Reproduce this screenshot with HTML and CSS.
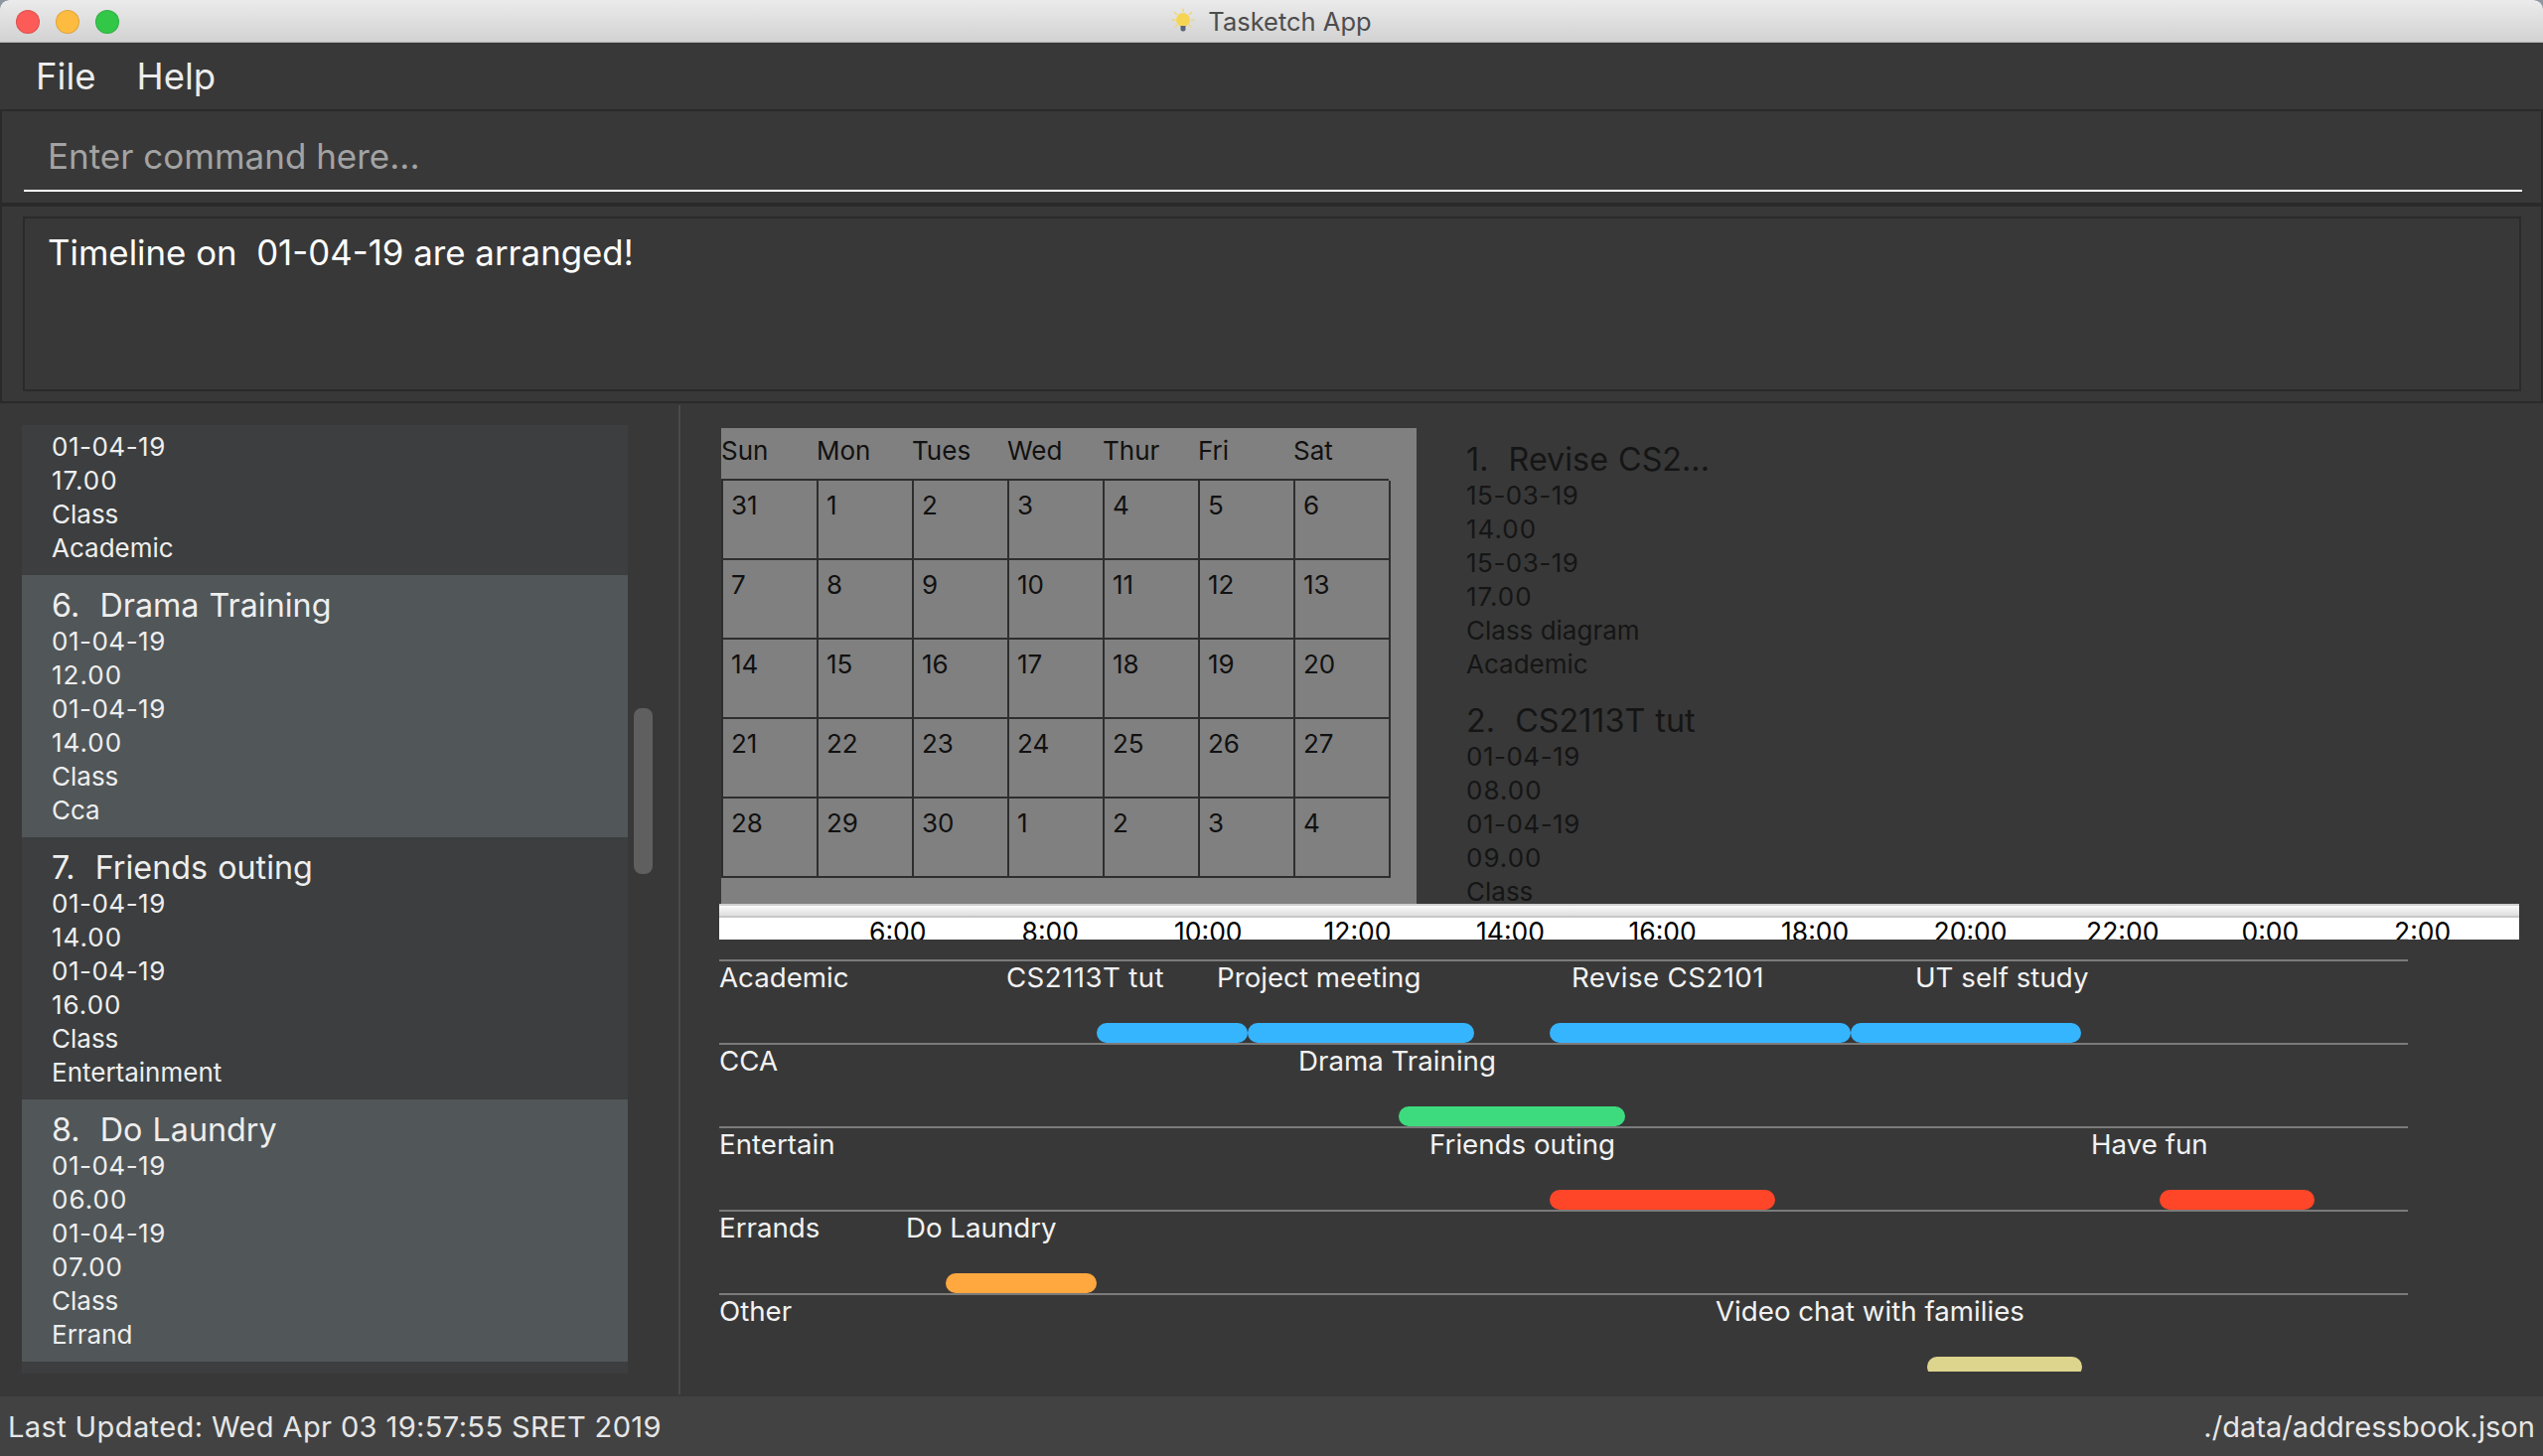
FILE: index.html
```html
<!DOCTYPE html>
<html>
<head>
  <meta charset="UTF-8">
  <title>Tasketch App</title>
  <link rel="stylesheet" href="styles.css">
</head>
<body>
  <div class="window">
    <header class="titlebar">
      <div class="lights">
        <span class="light red"></span>
        <span class="light amber"></span>
        <span class="light green"></span>
      </div>
      <div class="title">
        <svg class="bulb" width="24" height="26" viewBox="0 0 24 26">
          <g stroke="#ecd67e" stroke-width="1.4" stroke-linecap="round">
            <path d="M12 1v2.500M3.500 4.500l2 2M20.500 4.500l-2 2M1 12h2.500M23 12h-2.500M4 19l1.800-1.500M20 19l-1.800-1.500"/>
          </g>
          <circle cx="12" cy="12" r="7" fill="#f6d555"/>
          <path d="M9.500 18h5v3.500a2 2 0 0 1-2 2h-1a2 2 0 0 1-2-2z" fill="#5b6478"/>
        </svg>
        <span>Tasketch App</span>
      </div>
    </header>

    <nav class="menubar">
      <span>File</span>
      <span>Help</span>
    </nav>

    <section class="command">
      <div class="command-input">Enter command here...</div>
    </section>

    <section class="result">
      <div class="result-box">Timeline on &nbsp;01-04-19 are arranged!</div>
    </section>

    <main class="split">
      <aside class="list-pane">
        <div class="task-list">
          <div class="card card-cut">
            <div class="date">01-04-19</div>
            <div class="time">17.00</div>
            <div>Class</div>
            <div>Academic</div>
          </div>
          <div class="card card-alt">
            <div class="card-name">6. &nbsp;Drama Training</div>
            <div class="date">01-04-19</div>
            <div class="time">12.00</div>
            <div class="date">01-04-19</div>
            <div class="time">14.00</div>
            <div>Class</div>
            <div>Cca</div>
          </div>
          <div class="card">
            <div class="card-name">7. &nbsp;Friends outing</div>
            <div class="date">01-04-19</div>
            <div class="time">14.00</div>
            <div class="date">01-04-19</div>
            <div class="time">16.00</div>
            <div>Class</div>
            <div>Entertainment</div>
          </div>
          <div class="card card-alt">
            <div class="card-name">8. &nbsp;Do Laundry</div>
            <div class="date">01-04-19</div>
            <div class="time">06.00</div>
            <div class="date">01-04-19</div>
            <div class="time">07.00</div>
            <div>Class</div>
            <div>Errand</div>
          </div>
        </div>
        <div class="scrollbar"></div>
      </aside>

      <div class="main-pane">
        <div class="top-row">
          <div class="calendar">
            <div class="weekdays">
              <span>Sun</span><span>Mon</span><span>Tues</span><span>Wed</span><span>Thur</span><span>Fri</span><span>Sat</span>
            </div>
            <div class="days">
              <span>31</span><span>1</span><span>2</span><span>3</span><span>4</span><span>5</span><span>6</span>
              <span>7</span><span>8</span><span>9</span><span>10</span><span>11</span><span>12</span><span>13</span>
              <span>14</span><span>15</span><span>16</span><span>17</span><span>18</span><span>19</span><span>20</span>
              <span>21</span><span>22</span><span>23</span><span>24</span><span>25</span><span>26</span><span>27</span>
              <span>28</span><span>29</span><span>30</span><span>1</span><span>2</span><span>3</span><span>4</span>
            </div>
          </div>

          <div class="today">
            <div class="today-item">
              <div class="today-name">1. &nbsp;Revise CS2...</div>
              <div class="date">15-03-19</div>
              <div class="time">14.00</div>
              <div class="date">15-03-19</div>
              <div class="time">17.00</div>
              <div>Class diagram</div>
              <div>Academic</div>
            </div>
            <div class="today-item">
              <div class="today-name">2. &nbsp;CS2113T tut</div>
              <div class="date">01-04-19</div>
              <div class="time">08.00</div>
              <div class="date">01-04-19</div>
              <div class="time">09.00</div>
              <div>Class</div>
            </div>
          </div>
        </div>

        <div class="axis">
          <div class="axis-head"></div>
          <div class="axis-ticks">
            <span>6:00</span><span>8:00</span><span>10:00</span><span class="wide">12:00</span><span class="wide">14:00</span><span class="wide">16:00</span><span class="wide">18:00</span><span class="wide">20:00</span><span class="wide">22:00</span><span>0:00</span><span>2:00</span>
          </div>
        </div>

        <div class="gantt">
          <div class="lane">
            <span class="lane-name">Academic</span>
            <span class="event digits" style="left: 289px">CS2113T tut</span>
            <span class="event" style="left: 501px">Project meeting</span>
            <span class="event digits" style="left: 858px">Revise CS2101</span>
            <span class="event" style="left: 1204px">UT self study</span>
            <span class="bar blue" style="left: 380px; width: 152px"></span>
            <span class="bar blue" style="left: 532px; width: 228px"></span>
            <span class="bar blue" style="left: 836px; width: 303px"></span>
            <span class="bar blue" style="left: 1139px; width: 232px"></span>
          </div>
          <div class="lane">
            <span class="lane-name">CCA</span>
            <span class="event" style="left: 583px">Drama Training</span>
            <span class="bar mint" style="left: 684px; width: 228px"></span>
          </div>
          <div class="lane">
            <span class="lane-name">Entertain</span>
            <span class="event" style="left: 715px">Friends outing</span>
            <span class="event" style="left: 1381px">Have fun</span>
            <span class="bar tomato" style="left: 836px; width: 227px"></span>
            <span class="bar tomato" style="left: 1450px; width: 156px"></span>
          </div>
          <div class="lane">
            <span class="lane-name">Errands</span>
            <span class="event" style="left: 188px">Do Laundry</span>
            <span class="bar orange" style="left: 228px; width: 152px"></span>
          </div>
          <div class="lane lane-last">
            <span class="lane-name">Other</span>
            <span class="event" style="left: 1003px">Video chat with families</span>
            <span class="bar sand" style="left: 1216px; width: 156px"></span>
          </div>
        </div>
      </div>
    </main>

    <footer class="statusbar">
      <span class="updated">Last Updated: Wed Apr 03 19:57:55 SRET 2019</span>
      <span>./data/addressbook.json</span>
    </footer>
  </div>
</body>
</html>
```

FILE: styles.css
```css
/* Page */
html, body {
  margin: 0;
  padding: 0;
  background-color: #8d96a3;
}

.window {
  display: flex;
  flex-direction: column;
  width: 2560px;
  height: 1466px;
  overflow: hidden;
  border-radius: 9px 9px 0 0;
  background-color: #383838;
  color: #fff;
  font-family: Inter, Roboto, "Noto Sans", sans-serif;
}

/* Title bar */
.titlebar {
  display: flex;
  flex: none;
  align-items: center;
  justify-content: center;
  position: relative;
  height: 43px;
  box-sizing: border-box;
  border-bottom: 1px solid #b4b4b4;
  background: linear-gradient(#ebebeb, #d2d2d2);
}

.lights {
  display: flex;
  gap: 16px;
  position: absolute;
  left: 16px;
  top: 10px;
}

.light {
  width: 22px;
  height: 22px;
  border: 1px solid rgba(0, 0, 0, 0.12);
  border-radius: 50%;
}

.red { background-color: #fc5b57; }
.amber { background-color: #fdbc40; }
.green { background-color: #33c748; }

.title {
  display: flex;
  align-items: center;
  gap: 13px;
  color: #4d4d4d;
  font-size: 25.5px;
}

/* Menu */
.menubar {
  display: flex;
  flex: none;
  gap: 41px;
  align-items: center;
  height: 67px;
  padding-left: 36px;
  border-bottom: 2px solid #2a2a2a;
  font-size: 36.5px;
  color: #ececec;
}

/* Command box */
.command {
  flex: none;
  height: 92px;
  padding: 0 19px 0 22px;
  border-left: 2px solid #2a2a2a;
  border-right: 2px solid #2a2a2a;
  box-sizing: border-box;
}

.command-input {
  height: 81px;
  box-sizing: border-box;
  padding: 23px 0 0 24px;
  border-bottom: 2px solid #fff;
  color: #a3a3a3;
  font-size: 35px;
  line-height: 44px;
}

/* Result box */
.result {
  flex: none;
  height: 202px;
  box-sizing: border-box;
  padding: 10px 20px 10px 21px;
  border: 2px solid #2a2a2a;
  border-top-width: 4px;
}

.result-box {
  height: 100%;
  box-sizing: border-box;
  padding: 11px 0 0 23px;
  border: 2px solid #2a2a2a;
  font-size: 34.8px;
  line-height: 46px;
}

/* Main split */
.split {
  display: flex;
  flex: 1;
  min-height: 0;
}

.list-pane {
  display: flex;
  flex: none;
  width: 683px;
  height: 976px;
  margin: 2px 0;
  padding-top: 20px;
  border-right: 2px solid #4a4a4a;
}

.task-list {
  flex: none;
  width: 610px;
  height: 955px;
  margin-left: 22px;
  background-color: #3c3e3f;
  font-size: 26px;
  line-height: 34px;
  color: #eee;
}

.card {
  height: 264px;
  box-sizing: border-box;
  padding: 11px 30px 0;
}

.card-cut {
  height: 151px;
  padding-top: 5px;
}

.card-alt {
  background-color: #515658;
}

.card-name {
  font-size: 32.3px;
  line-height: 39px;
  word-spacing: 1px;
}

/* digits sit a bit wider in the original font */
.date {
  letter-spacing: 0.5px;
}

.time {
  letter-spacing: 1px;
}

.scrollbar {
  flex: none;
  width: 19px;
  height: 167px;
  margin: 285px 0 0 6px;
  border-radius: 8px;
  background-color: #5f5f5f;
}

/* Right side */
.main-pane {
  flex: 1;
  min-width: 0;
  padding: 25px 0 0 39px;
  box-sizing: border-box;
  height: 975px;
  overflow: hidden;
}

.top-row {
  display: flex;
  height: 479px;
  margin-left: 2px;
  overflow: hidden;
}

.calendar {
  flex: none;
  width: 700px;
  background-color: #808080;
  color: #111;
  font-size: 26px;
}

.weekdays {
  display: grid;
  grid-template-columns: repeat(7, 96px);
  height: 51px;
  line-height: 46px;
}

.days {
  display: grid;
  grid-template-columns: repeat(7, 96px);
  grid-auto-rows: 80px;
  width: 672px;
  box-sizing: border-box;
  border-top: 2px solid #2e2e2e;
  border-left: 2px solid #2e2e2e;
}

.days span {
  padding: 9px 0 0 8px;
  border-right: 2px solid #2e2e2e;
  border-bottom: 2px solid #2e2e2e;
  line-height: 32px;
}

.today {
  flex: 1;
  padding: 12px 0 0 50px;
  color: #151515;
  font-size: 26px;
  line-height: 34px;
}

.today-item {
  margin-bottom: 20px;
}

.today-name {
  font-size: 32.3px;
  line-height: 39px;
  word-spacing: 1px;
}

/* Time axis */
.axis {
  width: 1812px;
  height: 36px;
  overflow: hidden;
  background-color: #fff;
  color: #000;
}

.axis-head {
  height: 14px;
  box-sizing: border-box;
  border-top: 2px solid #cfcfcf;
  border-bottom: 2px solid #c8c8c8;
  background: linear-gradient(#fbfbfb, #dedede);
}

.axis-ticks {
  display: grid;
  grid-template-columns: repeat(11, 153.5px);
  padding-left: 151px;
  height: 22px;
  font-size: 26.5px;
  line-height: 29px;
}

.axis-ticks .wide {
  margin-left: -3px;
}

/* Gantt lanes */
.gantt {
  width: 1700px;
  margin-top: 20px;
}

.lane {
  position: relative;
  height: 82px;
  border-top: 2px solid #7b7b7b;
  font-size: 27.7px;
  line-height: 33px;
  color: #f2f2f2;
}

.lane-last {
  height: 78px;
  overflow: hidden;
}

.lane-name {
  display: block;
}

.event {
  position: absolute;
  top: 0;
  white-space: nowrap;
}

.digits {
  letter-spacing: 0.4px;
}

.bar {
  position: absolute;
  top: 62px;
  height: 20px;
  border-radius: 10px;
}

.blue { background-color: #36b5ff; }
.mint { background-color: #3ddb7e; }
.tomato { background-color: #ff4628; }
.orange { background-color: #ffa83f; }
.sand { background-color: #ddd48d; }

/* Status bar */
.statusbar {
  display: flex;
  flex: none;
  justify-content: space-between;
  align-items: center;
  height: 60px;
  padding: 0 8px;
  background-color: #424242;
  color: #e6e6e6;
  font-size: 29.1px;
}

.updated {
  letter-spacing: 0.35px;
}
```
